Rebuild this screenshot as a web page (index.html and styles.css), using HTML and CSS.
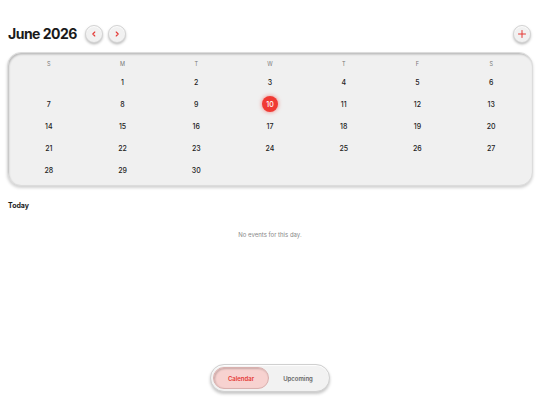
FILE: index.html
```html
<!DOCTYPE html>
<html>
<head>
<meta charset="utf-8">
<link rel="stylesheet" href="styles.css">
</head>
<body>
<div class="app">
  <header class="top">
    <div class="title-group">
      <h1 class="title">June 2026</h1>
      <button class="circle-btn" aria-label="Previous month">
        <svg viewBox="0 0 10 10" width="8" height="8"><path d="M6 2.5 L3.5 5 L6 7.5" fill="none" stroke="#e53935" stroke-width="1.4" stroke-linecap="round" stroke-linejoin="round"/></svg>
      </button>
      <button class="circle-btn" aria-label="Next month">
        <svg viewBox="0 0 10 10" width="8" height="8"><path d="M4 2.5 L6.5 5 L4 7.5" fill="none" stroke="#e53935" stroke-width="1.4" stroke-linecap="round" stroke-linejoin="round"/></svg>
      </button>
    </div>
    <button class="circle-btn add" aria-label="Add event">
      <svg viewBox="0 0 10 10" width="10" height="10"><path d="M5 1.5 V8.5 M1.5 5 H8.5" fill="none" stroke="#e53935" stroke-width="1" stroke-linecap="round"/></svg>
    </button>
  </header>

  <section class="card">
    <div class="grid">
      <div class="wd">S</div><div class="wd">M</div><div class="wd">T</div><div class="wd">W</div><div class="wd">T</div><div class="wd">F</div><div class="wd">S</div>
      <div class="d"></div><div class="d">1</div><div class="d">2</div><div class="d">3</div><div class="d">4</div><div class="d">5</div><div class="d">6</div>
      <div class="d">7</div><div class="d">8</div><div class="d">9</div><div class="d"><span class="today">10</span></div><div class="d">11</div><div class="d">12</div><div class="d">13</div>
      <div class="d">14</div><div class="d">15</div><div class="d">16</div><div class="d">17</div><div class="d">18</div><div class="d">19</div><div class="d">20</div>
      <div class="d">21</div><div class="d">22</div><div class="d">23</div><div class="d">24</div><div class="d">25</div><div class="d">26</div><div class="d">27</div>
      <div class="d">28</div><div class="d">29</div><div class="d">30</div><div class="d"></div><div class="d"></div><div class="d"></div><div class="d"></div>
    </div>
  </section>

  <section class="events">
    <h2 class="events-title">Today</h2>
    <p class="empty">No events for this day.</p>
  </section>

  <nav class="tabs">
    <div class="tab-bar">
      <button class="tab active">Calendar</button>
      <button class="tab">Upcoming</button>
    </div>
  </nav>
</div>
</body>
</html>
```

FILE: styles.css
```css
* { box-sizing: border-box; margin: 0; padding: 0; }
html, body { width: 540px; height: 405px; background: #ffffff; }
body { font-family: "Inter", "Liberation Sans", sans-serif; color: #1a1a1a; overflow: hidden; }

.app { display: flex; flex-direction: column; height: 405px; padding: 24px 7px 0 7px; }

.top { display: flex; align-items: center; justify-content: space-between; height: 20px; }
.title-group { display: flex; align-items: center; gap: 5px; padding-left: 1px; }
.title { font-size: 14px; font-weight: 700; letter-spacing: -0.5px; margin-right: 3px; line-height: 20px; }

.circle-btn {
  width: 18px; height: 18px; border-radius: 50%;
  border: 1px solid #d4d4d4;
  background: #f1f1f1;
  box-shadow: 0 1.5px 2.5px rgba(0,0,0,0.25), inset 0 1px 1px rgba(255,255,255,0.9);
  display: flex; align-items: center; justify-content: center;
}
.circle-btn.add { margin-right: 2px; }

.card {
  margin-top: 8px;
  background: #f0f0f0;
  border-radius: 14px;
  padding: 4px;
  box-shadow: inset 1px 1.5px 2px rgba(0,0,0,0.22), 0 2px 3px rgba(0,0,0,0.18);
  border: 1px solid #dcdcdc;
}
.grid { display: grid; grid-template-columns: repeat(7, 1fr); grid-template-rows: 14px; grid-auto-rows: 22px; }
.wd { display: flex; align-items: center; justify-content: center; font-size: 5.5px; color: #777; }
.d { display: flex; align-items: center; justify-content: center; font-size: 7px; font-weight: 500; color: #222; }
.today {
  width: 16px; height: 16px; border-radius: 50%;
  background: #f03a34; color: #fff;
  display: flex; align-items: center; justify-content: center;
  box-shadow: 0 0 4px rgba(240,58,52,0.6);
  font-size: 7px;
}

.events { padding: 15px 1px 0; }
.events-title { font-size: 7px; font-weight: 700; color: #1a1a1a; }
.empty { text-align: center; font-size: 6px; color: #888; margin-top: 21px; }

.tabs { margin-top: auto; display: flex; justify-content: center; padding-bottom: 13px; }
.tab-bar {
  display: flex; align-items: center; width: 120px; height: 28px; padding: 2px;
  border-radius: 14px; background: #f2f2f2; border: 1px solid #d0d0d0;
  box-shadow: 0 2px 3px rgba(0,0,0,0.22), inset 0 1px 1px rgba(255,255,255,0.9);
}
.tab {
  flex: 1; height: 22px; border: none; background: transparent; border-radius: 11px;
  font-family: inherit; font-size: 6px; font-weight: 600; color: #666;
}
.tab.active {
  flex: 0 0 56px; background: #f7d2d0; color: #e53935;
  box-shadow: inset 1px 1px 2px rgba(0,0,0,0.2);
  border: 1px solid #d9b0ae;
}
```
